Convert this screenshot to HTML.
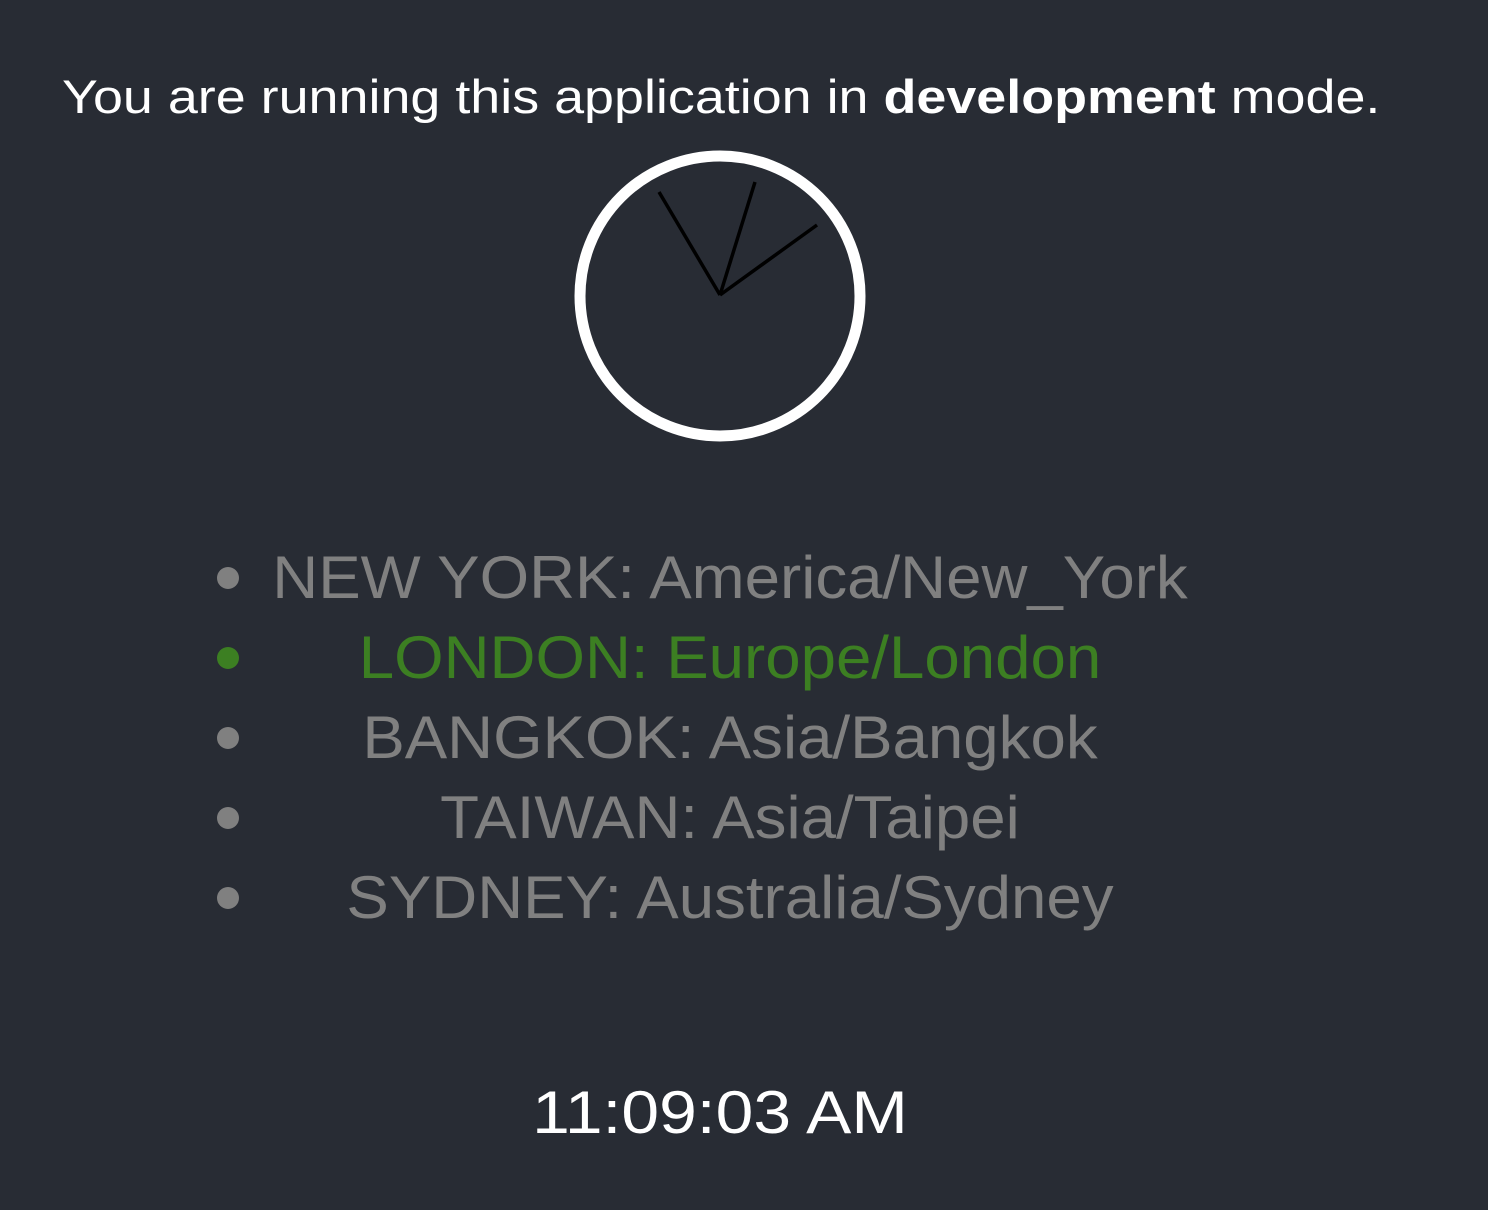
<!DOCTYPE html>
<html><head><meta charset="utf-8"><style>
html,body{margin:0;padding:0;background:#282c34;width:1488px;height:1210px;overflow:hidden;font-family:"Liberation Sans",sans-serif;}
.top{position:absolute;left:62px;top:69px;font-size:47px;color:#fff;white-space:nowrap;transform-origin:0 50%;transform:scaleX(1.146);}
.li{position:absolute;left:260px;width:940px;text-align:center;font-size:60px;color:#808080;white-space:nowrap;height:80px;line-height:80px;transform:scaleX(1.06);}
.dot{position:absolute;left:217px;width:22px;height:22px;border-radius:50%;background:#808080;}
.g{color:#3c7f22}
.time{position:absolute;left:0;width:1440px;text-align:center;top:1078px;font-size:60px;color:#fff;transform:scaleX(1.13);}
</style></head><body>
<div class="top">You are running this application in <b>development</b> mode.</div>
<svg style="position:absolute;left:0;top:0" width="1488" height="460">
<circle cx="720" cy="296" r="140" fill="none" stroke="#fff" stroke-width="11"/>
<g stroke="#000" stroke-width="3.5" stroke-linecap="butt">
<line x1="720" y1="295" x2="659" y2="192"/>
<line x1="720" y1="295" x2="755" y2="182"/>
<line x1="720" y1="295" x2="817" y2="225"/>
</g>
</svg>
<div class="dot" style="top:567px"></div><div class="li" style="top:538px;left:275px;width:910px">NEW YORK: America/New_York</div>
<div class="dot" style="top:647px;background:#3c7f22"></div><div class="li g" style="top:618px">LONDON: Europe/London</div>
<div class="dot" style="top:727px"></div><div class="li" style="top:698px">BANGKOK: Asia/Bangkok</div>
<div class="dot" style="top:807px"></div><div class="li" style="top:778px">TAIWAN: Asia/Taipei</div>
<div class="dot" style="top:887px"></div><div class="li" style="top:858px">SYDNEY: Australia/Sydney</div>
<div class="time">11:09:03 AM</div>
</body></html>
